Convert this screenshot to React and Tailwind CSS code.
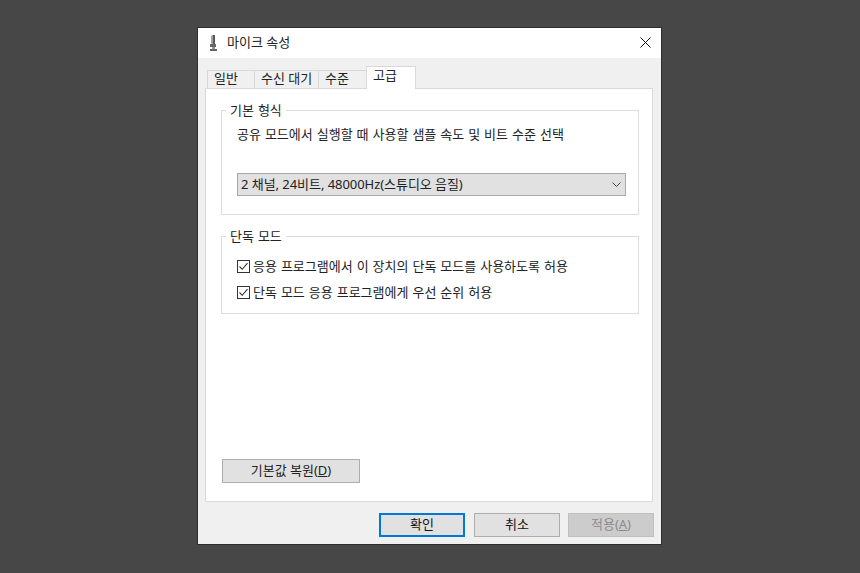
const font = { fontFamily: '"Noto Sans", "Noto Sans CJK KR", sans-serif' };

function Tab({ label, className }) {
  return (
    <div className={`flex h-[18px] items-center border-t border-l border-[#d9d9d9] pb-[2px] pl-[6px] text-[13px] leading-none text-[#222] ${className}`}>
      {label}
    </div>
  );
}

function Group({ title, className, children }) {
  return (
    <div className={`relative border border-[#dcdcdc] ${className}`}>
      <div className="absolute -top-[9px] left-[4px] bg-white px-[4px] text-[13px] leading-[16px] text-[#222] [word-spacing:0.6px]">{title}</div>
      {children}
    </div>
  );
}

function Check({ label }) {
  return (
    <div className="flex h-[26px] items-center gap-[3px] text-[13px] leading-none text-[#222] [word-spacing:0.6px]">
      <svg width="13" height="13" viewBox="0 0 13 13" className="shrink-0">
        <rect x="0.5" y="0.5" width="12" height="12" fill="#fff" stroke="#333" />
        <path d="M2.5 6.5 L5.2 9.3 L10.5 3.2" fill="none" stroke="#333" strokeWidth="1.1" />
      </svg>
      <span>{label}</span>
    </div>
  );
}

function Btn({ label, accel, className }) {
  return (
    <button className={`flex h-[24px] items-center justify-center border pb-px text-[13px] leading-none ${className}`}>
      {label}
      {accel ? <span>(<u>{accel}</u>)</span> : null}
    </button>
  );
}

export default function App() {
  return (
    <div className="h-[573px] w-[860px] overflow-hidden bg-[#474747] pl-[197px] pt-[27px]" style={font}>
      <div className="flex h-[518px] w-[465px] flex-col border border-[#2e2e2e]">
        <div className="flex h-[30px] items-center bg-white pl-[10px] pr-[10px]">
          <svg width="12" height="18" viewBox="0 0 12 18" className="shrink-0">
            <rect x="3" y="1" width="4" height="9" rx="1.5" fill="#a0a0a0" />
            <rect x="5" y="1" width="2" height="10" fill="#5a5a5a" />
            <rect x="2" y="10" width="6" height="3" fill="#666" />
            <rect x="4" y="13" width="3" height="2" fill="#999" />
            <rect x="2" y="15" width="7" height="2" fill="#666" />
          </svg>
          <div className="-mt-[2px] ml-[7px] text-[13px] leading-none text-[#222]">마이크 속성</div>
          <svg width="11" height="11" viewBox="0 0 11 11" className="-mt-[2px] ml-auto">
            <path d="M0.5 0.5 L10.5 10.5 M10.5 0.5 L0.5 10.5" stroke="#111" strokeWidth="1" fill="none" />
          </svg>
        </div>
        <div className="flex flex-1 flex-col bg-[#f0f0f0] pl-[7px] pr-[8px]">
          <div className="flex h-[30px] items-end pl-[2px]">
            <Tab label="일반" className="w-[47px]" />
            <Tab label="수신 대기" className="w-[64px]" />
            <Tab label="수준" className="w-[48px]" />
            <div className="relative z-10 -mb-px flex h-[23px] w-[50px] items-start border-x border-t border-[#d9d9d9] bg-white pl-[6px] text-[13px] leading-[16px] text-[#222]">
              고급
            </div>
          </div>
          <div className="flex h-[414px] flex-col border border-[#d9d9d9] bg-white pl-[15px] pr-[13px] pt-[21px]">
            <Group title="기본 형식" className="h-[105px] px-[15px]">
              <div className="pt-[14px] text-[13px] leading-[18px] text-[#222] [word-spacing:0.6px]">공유 모드에서 실행할 때 사용할 샘플 속도 및 비트 수준 선택</div>
              <div className="mt-[30px] flex h-[23px] w-[389px] items-center justify-between border border-[#a8a8a8] bg-[#e1e1e1] pl-[3px] pr-[4px] text-[13px] leading-none tracking-[-0.05px] text-[#222]">
                <span>2 채널, 24비트, 48000Hz(스튜디오 음질)</span>
                <svg width="9" height="6" viewBox="0 0 9 6">
                  <path d="M0.5 0.5 L4.5 4.5 L8.5 0.5" fill="none" stroke="#444" strokeWidth="1" />
                </svg>
              </div>
            </Group>
            <Group title="단독 모드" className="mt-[21px] h-[78px] pl-[15px] pt-[16px]">
              <Check label="응용 프로그램에서 이 장치의 단독 모드를 사용하도록 허용" />
              <Check label="단독 모드 응용 프로그램에게 우선 순위 허용" />
            </Group>
            <Btn
              label="기본값 복원"
              accel="D"
              className="ml-px mt-[145px] w-[138px] border-[#adadad] bg-[#e1e1e1] text-[#222]"
            />
          </div>
          <div className="-mr-px mt-[11px] flex justify-end gap-[9px]">
            <Btn label="확인" className="w-[86px] border-2 border-[#0078d7] bg-[#e1e1e1] text-[#111]" />
            <Btn label="취소" className="w-[86px] border-[#adadad] bg-[#e1e1e1] text-[#111]" />
            <Btn label="적용" accel="A" className="-ml-px w-[86px] border-[#bfbfbf] bg-[#cccccc] text-[#8a8a8a]" />
          </div>
        </div>
      </div>
    </div>
  );
}
